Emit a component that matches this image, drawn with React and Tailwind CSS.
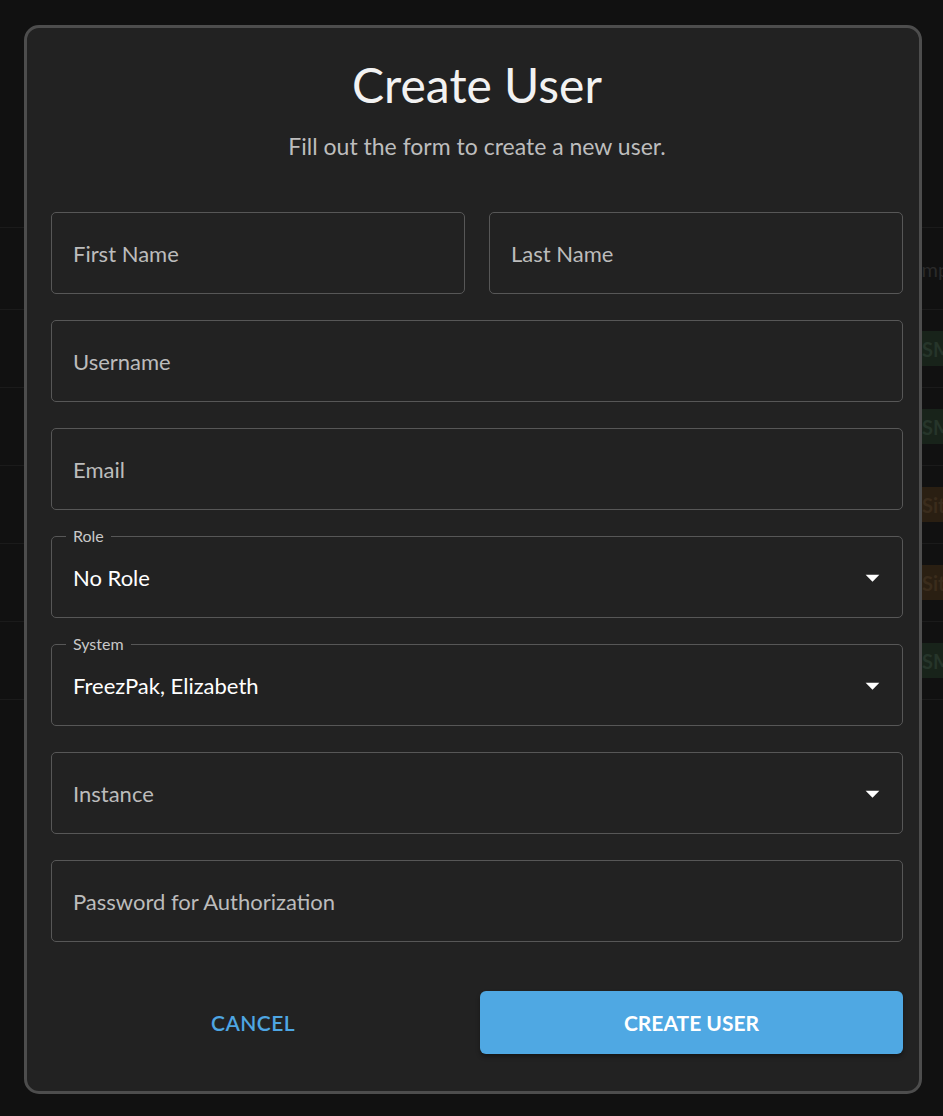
import React from 'react';

const font = { fontFamily: 'Lato, "Open Sans", sans-serif' };

const rows = [
  { chip: 'SMS', tone: 'green' },
  { chip: 'SMS', tone: 'green' },
  { chip: 'Site', tone: 'orange' },
  { chip: 'Site', tone: 'orange' },
  { chip: 'SMS', tone: 'green' },
];

const Caret = () => (
  <svg viewBox="0 0 24 24" className="w-[33px] h-[33px] fill-white">
    <path d="M7 10l5 5 5-5z" />
  </svg>
);

const TextField = ({ placeholder }) => (
  <div className="h-[82px] rounded-[5px] border border-[#575757] flex items-center px-[21px]">
    <span className="text-[22px] text-[#bcbcbc]">{placeholder}</span>
  </div>
);

const SelectField = ({ label, value, placeholder }) => (
  <div className="relative h-[82px] rounded-[5px] border border-[#575757] flex items-center pl-[21px] pr-[13px]">
    {label && (
      <span className="absolute -top-[11px] left-[14px] px-[7px] bg-[#222222] text-[16px] leading-[20px] text-[#c8c8c8]">
        {label}
      </span>
    )}
    <span className={`flex-1 text-[22px] ${value ? 'text-white' : 'text-[#bcbcbc]'}`}>{value || placeholder}</span>
    <Caret />
  </div>
);

export default function App() {
  return (
    <div className="relative w-full h-[1116px] bg-[#111111] overflow-hidden" style={font}>
      {/* table behind the dialog */}
      <div className="pt-[227px]">
        <div className="h-[83px] border-t border-b border-[#1b1b1b] flex items-center pl-[890px] text-[20px] text-[#2a2a2a]">
          Example
        </div>
        {rows.map((r, i) => (
          <div key={i} className="h-[78px] border-b border-[#1b1b1b] flex items-center pl-[906px]">
            <span
              className={`h-[35px] px-4 flex items-center rounded text-[20px] font-bold ${
                r.tone === 'green' ? 'bg-[#18231a] text-[#26352a]' : 'bg-[#2a1f12] text-[#3a2c1c]'
              }`}
            >
              {r.chip}
            </span>
          </div>
        ))}
      </div>

      {/* dialog */}
      <div className="absolute left-[24px] top-[25px] w-[898px] rounded-[15px] border-[3px] border-[#4d4d4d] bg-[#222222] pl-[24px] pr-[16px] pt-[26px] pb-[37px]">
        <h1 className="text-center text-[48px] leading-[62px] text-[#f2f2f2]">Create User</h1>
        <p className="mt-[17px] text-center text-[23px] leading-[26px] text-[#bdbdbd]">
          Fill out the form to create a new user.
        </p>

        <div className="mt-[53px] flex flex-col gap-[26px]">
          <div className="grid grid-cols-2 gap-[24px]">
            <TextField placeholder="First Name" />
            <TextField placeholder="Last Name" />
          </div>
          <TextField placeholder="Username" />
          <TextField placeholder="Email" />
          <SelectField label="Role" value="No Role" />
          <SelectField label="System" value="FreezPak, Elizabeth" />
          <SelectField placeholder="Instance" />
          <TextField placeholder="Password for Authorization" />
        </div>

        <div className="mt-[49px] flex gap-[25px]">
          <button className="w-[404px] h-[63px] text-[21px] font-semibold uppercase text-[#4ea6e3] tracking-[0.4px]">
            Cancel
          </button>
          <button className="flex-1 h-[63px] rounded-[6px] bg-[#4fa8e3] text-[21px] font-bold uppercase text-white shadow-[0_3px_4px_rgba(0,0,0,0.35)]">
            Create User
          </button>
        </div>
      </div>
    </div>
  );
}
